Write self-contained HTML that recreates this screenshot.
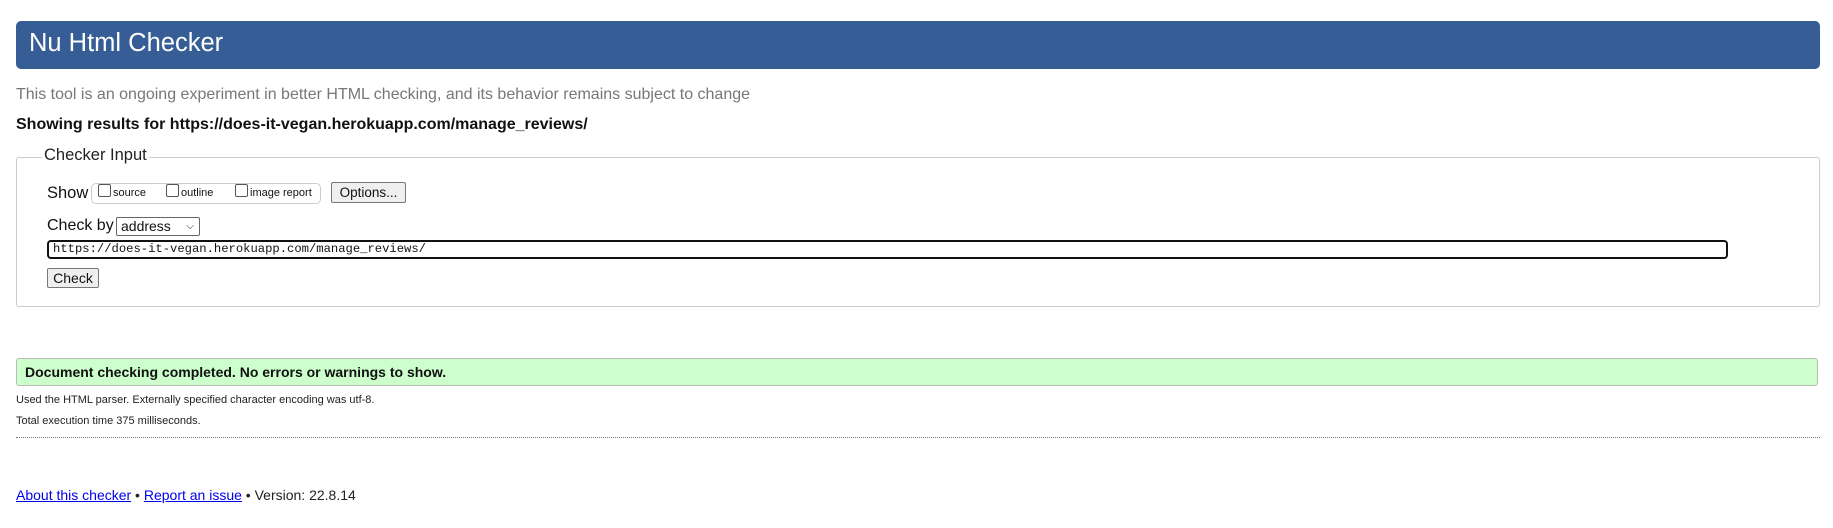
<!DOCTYPE html>
<html><head><meta charset="utf-8"><style>
body{margin:0;width:1833px;height:528px;background:#fff;font-family:"Liberation Sans",Arial,sans-serif;color:#111;position:relative;overflow:hidden}
.a{position:absolute;white-space:nowrap}
.hdr{left:16px;top:21px;width:1804px;height:48px;background:#365d95;border-radius:5px}
.hdr span{position:absolute;left:13px;top:8px;color:#fff;font-size:25.5px}
.cb{display:inline-block;width:11px;height:11px;border:1px solid #555;border-radius:2px;vertical-align:-1px;margin-right:2px;background:#fff}
.btn{border:1px solid #777;background:#efefef;border-radius:2px;font-size:14px;text-align:center;box-sizing:border-box}
a{color:#00e}
</style></head><body>
<div class="a hdr"><span>Nu Html Checker</span></div>
<div class="a" style="left:16px;top:86px;font-size:16px;color:#777">This tool is an ongoing experiment in better HTML checking, and its behavior remains subject to change</div>
<div class="a" style="left:16px;top:116px;font-size:16px;font-weight:bold">Showing results for https://does-it-vegan.herokuapp.com/manage_reviews/</div>
<div class="a" style="left:16px;top:157px;width:1802px;height:148px;border:1px solid #ccc;border-radius:3px"></div>
<div class="a" style="left:42px;top:146px;background:#fff;padding:0 2px;font-size:16.5px;color:#222">Checker Input</div>
<div class="a" style="left:47px;top:184px;font-size:16.5px">Show</div>
<div class="a" style="left:91px;top:183px;width:228px;height:19px;border:1px solid #ccc;border-radius:5px;font-size:11px;line-height:19px">
<span style="position:absolute;left:6px"><span class="cb"></span>source</span>
<span style="position:absolute;left:74px"><span class="cb"></span>outline</span>
<span style="position:absolute;left:143px"><span class="cb"></span>image report</span></div>
<div class="a btn" style="left:331px;top:182px;width:75px;height:21px;line-height:19px;font-size:13.5px">Options...</div>
<div class="a" style="left:47px;top:217px;font-size:16px">Check by</div>
<div class="a" style="left:116px;top:217px;width:84px;height:19px;border:1px solid #666;border-radius:2px;font-size:14px;line-height:17px;box-sizing:border-box;padding-left:4px">address<span style="position:absolute;right:5px;top:0;font-size:10px">&#9013;</span></div>
<div class="a" style="left:47px;top:240px;width:1681px;height:19px;border:2px solid #111;border-radius:4px;box-sizing:border-box;font-family:'Liberation Mono',monospace;font-size:12.2px;line-height:15px;padding-left:4px">https://does-it-vegan.herokuapp.com/manage_reviews/</div>
<div class="a btn" style="left:47px;top:268px;width:52px;height:20px;line-height:18px">Check</div>
<div class="a" style="left:16px;top:358px;width:1802px;height:28px;background:#ccffcc;border:1px solid #bbb;border-radius:3px;box-sizing:border-box"></div>
<div class="a" style="left:25px;top:364px;font-size:14px;font-weight:bold">Document checking completed. No errors or warnings to show.</div>
<div class="a" style="left:16px;top:394px;font-size:11px;color:#222">Used the HTML parser. Externally specified character encoding was utf-8.</div>
<div class="a" style="left:16px;top:415px;font-size:11px;color:#222">Total execution time 375 milliseconds.</div>
<div class="a" style="left:16px;top:437px;width:1804px;border-top:1px dotted #777"></div>
<div class="a" style="left:16px;top:487px;font-size:14px;color:#222"><a href="#">About this checker</a> • <a href="#">Report an issue</a> • Version: 22.8.14</div>
</body></html>
